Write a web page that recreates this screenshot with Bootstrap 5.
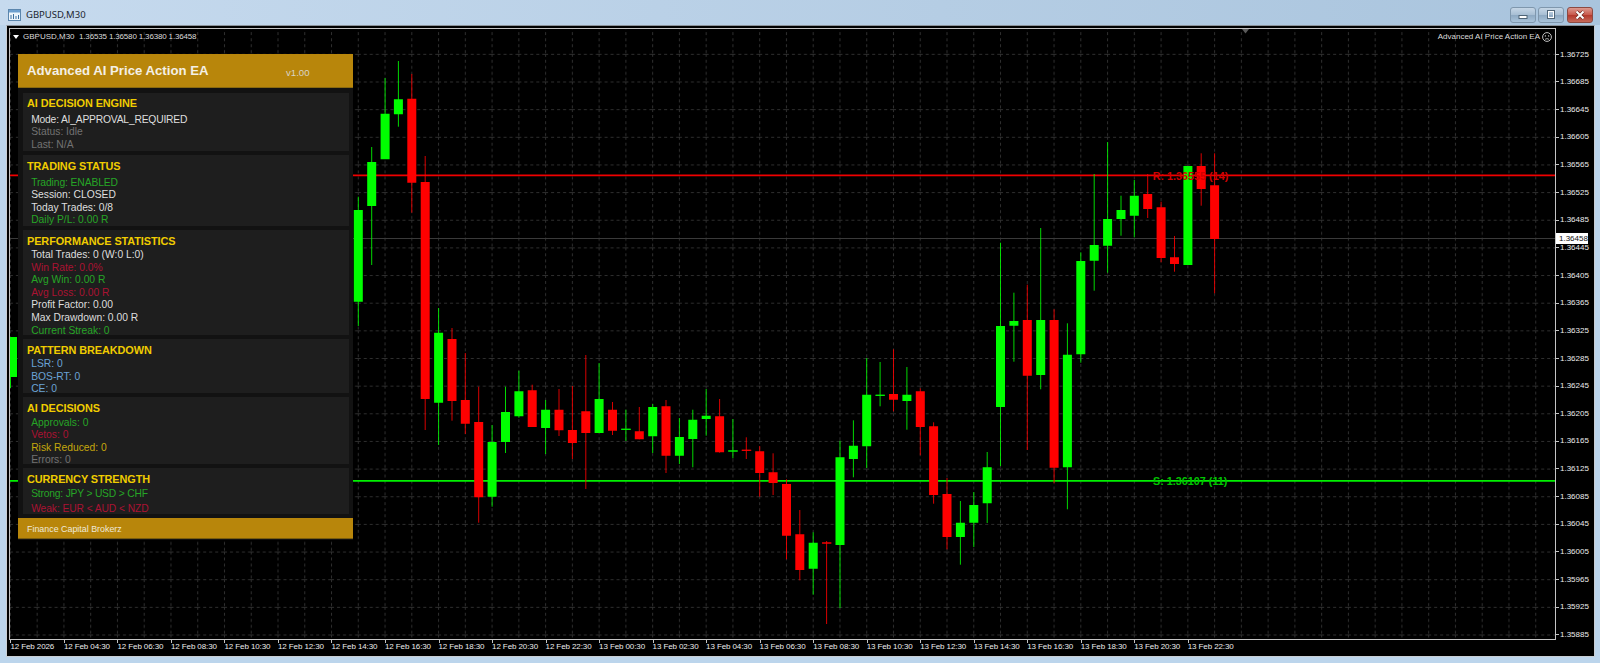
<!DOCTYPE html>
<html lang="en">
<head>
<meta charset="utf-8">
<title>GBPUSD,M30</title>
<link href="https://cdn.jsdelivr.net/npm/bootstrap@5.3.0/dist/css/bootstrap.min.css" rel="stylesheet">
<style>
html,body{height:663px;overflow:hidden;background:#bcd5ec;}
body{font-family:"Liberation Sans",Arial,sans-serif;}
.mt-root{height:663px;width:1600px;}
.mt-title{height:25px;padding:5px 7px 0 8px;background:linear-gradient(90deg,#c6daee,#a9c4dd);font-family:"Noto Sans",sans-serif;font-size:9.5px;color:#1c2630;}
.mt-title svg.ico{margin-right:5px;}
.btn-set{gap:2px;}
.win-btn{width:26px;height:16px;padding:0;border:1px solid #7f97ad;border-radius:3px;background:linear-gradient(180deg,#c6d6e6 0%,#a8bfd4 48%,#8ea9c2 52%,#a9c3da 100%);line-height:0;}
.win-btn.cl{margin-left:1px;background:linear-gradient(180deg,#dc9a90 0%,#c8594c 48%,#b4382c 52%,#c66a5a 100%);border-color:#8c4a42;}
.mt-frame{margin:0 5px 6px 6px;height:632px;border:1px solid #c9ced3;border-top-color:#8b9299;background:#000;padding:2px 0 0 2px;}
.plot-row{height:612px;}
.plot-box{width:1547px;height:612px;border:1px solid #c4c4c4;}
.plot-box svg.cv{display:block;width:1545px;height:610px;}
.price-axis{width:38px;padding-top:12.5px;color:#ececec;font-size:8px;}
.pr-lbl{height:27.65px;line-height:27.65px;}
.pr-lbl::before{content:"";width:3px;height:1px;background:#c4c4c4;margin-right:1px;flex:none;}
.pr-tag{left:0;top:205px;width:32px;height:11px;background:#fff;color:#111;line-height:11px;text-align:right;padding-right:2px;border-left:3px solid #fff;}
.time-axis{padding-left:1.4px;height:16px;color:#ececec;font-size:8px;letter-spacing:-.1px;}
.tm-lbl{width:53.52px;line-height:8px;white-space:nowrap;}
.tm-lbl::before{content:"";display:block;width:1px;height:3px;background:#c4c4c4;}
.ov-top{left:0;right:0;top:0;padding:2px 3px 0 3px;font-size:8px;line-height:11px;color:#dcdcdc;white-space:pre;}
.ov-tri{width:0;height:0;border-left:3.5px solid transparent;border-right:3.5px solid transparent;border-top:4px solid #fff;margin-right:4px;}
.ov-px{letter-spacing:-.16px;}
.ov-ea{margin-right:2px;}
.ea-panel{left:8px;top:25px;width:335px;height:486px;background:#121212;color:#ddd;font-size:10.3px;}
.ea-head{height:34px;padding-left:9px;background:#b8860b;border-bottom:1px solid #8a6a10;}
.ea-name{font-size:13.2px;font-weight:700;color:#f4f0e6;width:259px;line-height:34px;}
.ea-ver{font-size:9.6px;color:#d8d4c6;padding-top:5px;}
.ea-body{padding:4.5px 4.5px 4.3px;gap:4px;}
.ea-sec{background:#1e1e1e;padding-left:4.5px;}
.sec-a{height:58.7px;padding-top:3.4px;}
.sec-b{height:71px;padding-top:3.4px;}
.sec-c{height:105px;padding-top:3.7px;}
.sec-d{height:53.7px;padding-top:3.4px;}
.sec-e{height:67.3px;padding-top:4.3px;}
.sec-f{height:46px;padding-top:4px;}
.sec-ttl{font-size:10.9px;font-weight:700;line-height:14px;color:#f0cc00;letter-spacing:-.08px;}
.sec-a .sec-ttl{margin-bottom:3.7px;}
.sec-b .sec-ttl{margin-bottom:4px;}
.sec-c .sec-ttl,.sec-d .sec-ttl,.sec-e .sec-ttl,.sec-f .sec-ttl{margin-bottom:1.4px;}
.sec-row{line-height:12.55px;height:12.55px;padding-left:4.2px;white-space:nowrap;}
.sec-f .sec-row+.sec-row{margin-top:2.4px;}
.caps-tight{letter-spacing:-.2px;}
.caps-mid{letter-spacing:-.1px;}
.tx-w{color:#dedede;}.tx-g{color:#727272;}.tx-gn{color:#26a526;}.tx-r{color:#ab1233;}.tx-y{color:#c6a70c;}.tx-b{color:#6aa3d6;}
.ea-foot{height:21px;padding-left:9px;background:#b8860b;border-bottom:1px solid #7a5d0e;font-size:8.9px;color:#efe9d8;line-height:22px;}
</style>
</head>
<body>
<div class="mt-root d-flex flex-column">
  <div class="mt-title d-flex align-items-center">
    <svg class="ico" width="13" height="12" viewBox="0 0 13 12"><rect x=".5" y=".5" width="12" height="11" fill="#eef5fb" stroke="#5b86ad"/><rect x="1" y="1" width="11" height="2.5" fill="#6e9fce"/><path d="M3 10V6M5.500 10V5M8 10V7M10.500 10V6" stroke="#3d6f9e"/></svg>
    <span class="flex-grow-1">GBPUSD,M30</span>
    <div class="btn-set d-flex align-items-center">
      <button class="win-btn" type="button" aria-label="Minimise"><svg width="24" height="14" viewBox="0 0 24 14"><rect x="8" y="7.500" width="8" height="3" fill="#fff" stroke="#4f6476" stroke-width="1"/></svg></button>
      <button class="win-btn" type="button" aria-label="Restore"><svg width="24" height="14" viewBox="0 0 24 14"><rect x="8.500" y="2.500" width="7" height="8" fill="none" stroke="#4f6476"/><rect x="9.500" y="3.500" width="5" height="6" fill="none" stroke="#fff"/></svg></button>
      <button class="win-btn cl" type="button" aria-label="Close"><svg width="24" height="14" viewBox="0 0 24 14"><path d="M8.500 3.500l7 7M15.500 3.500l-7 7" stroke="#6e2a22" stroke-width="3.200"/><path d="M8.500 3.500l7 7M15.500 3.500l-7 7" stroke="#fff" stroke-width="2"/></svg></button>
    </div>
  </div>
  <div class="mt-frame">
    <div class="plot-row d-flex">
      <div class="plot-box position-relative">
        <svg class="cv" viewBox="10 29 1545 610" preserveAspectRatio="none">
          <defs>
            <pattern id="gridTile" patternUnits="userSpaceOnUse" x="9.900" y="53.850" width="26.760" height="27.650">
              <path d="M.5 0V27.650M0 .5H26.760" stroke="#2f2f2f" stroke-width="1" stroke-dasharray="3 3" fill="none"/>
            </pattern>
          </defs>
          <rect x="10" y="29" width="1545" height="610" fill="url(#gridTile)"/>
          <path d="M1242 29h7l-3.500 4.500z" fill="#5a5a5a"/>
          <path d="M10 238.500H1555" stroke="#3a3a3a"/>
          <path d="M10 175.300H1555" stroke="#f00000" stroke-width="1.700"/>
          <path d="M10 480.800H1555" stroke="#00f000" stroke-width="1.700"/>
          <g fill="none">
          <path stroke="#00ff00" stroke-width="9" d="M12.500 337V377M358.300 210V301.700M371.700 162V206M385.100 113.700V159.300M398.400 99.300V114.300M438.600 332.700V402.700M492.100 442V496.700M505.500 412V442M518.900 391.300V416.300M545.600 409.700V428M599.100 399V433M625.900 428.800V429.800M652.700 407V436.300M679.400 437V455.700M692.800 419.700V439M706.200 415.700V419M732.900 450.500V451.500M813.200 542.700V568.700M840 457.300V545M853.400 445.700V459M866.700 394.700V446.300M880.100 394.800V395.800M906.900 394.700V401M960.400 522.700V537M973.800 505V522.700M987.200 467.300V503.300M1000.500 326V407M1013.900 321V325.700M1040.700 320V375M1067.400 354.700V467.300M1080.800 261V354.300M1094.200 245V260.700M1107.600 219V245.700M1121 210V219M1134.300 195.700V215.700M1187.900 166V265"/>
          <path stroke="#ff0000" stroke-width="9" d="M411.800 98.700V182.700M425.200 182V399M452 339V401M465.300 400V423.700M478.700 422V497.300M532.200 390.300V427M559 409.700V430.300M572.400 430V443M585.800 411.300V433M612.500 409.700V430.700M639.300 431.300V439.300M666 406.300V455.700M719.600 416.300V452.300M746.300 449.800V450.800M759.700 451.300V473M773.100 472.300V483M786.500 484V535.700M799.800 534.300V570M826.600 542.500V543.500M893.500 394V399.700M920.300 391.300V427M933.600 426.300V495M947 494V537M1027.300 320V375.700M1054.100 320V467.700M1147.700 194V209M1161.100 207.300V258M1174.500 257.300V264M1201.200 166V189M1214.600 185.300V239"/>
          <path stroke="#00ff00" stroke-width=".85" d="M10.500 377V388M358.300 196.700V326M371.700 147V265M385.100 78V159M398.400 61V126.700M438.600 308V445M492.100 425V506.700M505.500 386.700V453M518.900 370.700V417.700M545.600 400V454M599.100 363V433M625.900 409.700V441M652.700 404V453M679.400 418V464M692.800 409.700V467.300M706.200 389V435.700M732.900 419V458.300M813.200 532.300V594.700M840 440.700V608M853.400 420.300V477.300M866.700 358V468M880.100 362V406.300M906.900 367V429.700M960.400 501V564.700M973.800 492V547M987.200 452V523M1000.500 242.700V466M1013.900 292.700V361.700M1040.700 228V389.300M1067.400 323.300V509.300M1080.800 252.300V362.700M1094.200 174V290.700M1107.600 142V272.700M1121 195.700V235.700M1134.300 180V237.300"/>
          <path stroke="#ff0000" stroke-width=".85" d="M411.800 74V212.700M425.200 156V430M452 328V420.700M465.300 353V434M478.700 386.700V522.700M532.200 384.700V427M559 389V436M572.400 386V459M585.800 355V489M612.500 402V435M639.300 407V439.300M666 400V473M719.600 399V452.700M746.300 437.300V459M759.700 446V496.700M773.100 453.300V495M786.500 479.300V559.300M799.800 510V580.300M826.600 541V624M893.500 349.300V411.300M920.300 388.300V455.300M933.600 422.300V503.700M947 478V549.300M1027.300 284.700V450M1054.100 309.300V483.300M1147.700 174V218M1161.100 201.700V262.300M1174.500 236V271.700M1201.200 153.300V205.700M1214.600 153.300V293.300"/>
          <path stroke="#00ff00" stroke-width=".85" d="M621 429.300h10M728 451h10M875.500 395.300h9.500"/>
          <path stroke="#ff0000" stroke-width=".85" d="M741.800 450.300h9.500M822 543h9.500"/>
          </g>
          <text x="1152.700" y="179.500" font-family="Liberation Sans" font-weight="700" font-size="10.800" fill="#d00000">R: 1.36555 (14)</text>
          <text x="1153" y="485" font-family="Liberation Sans" font-weight="700" font-size="10.800" fill="#00c400">S: 1.36107 (11)</text>
        </svg>
        <div class="ov-top position-absolute d-flex align-items-center">
          <span class="ov-tri"></span>
          <span class="flex-grow-1">GBPUSD,M30  <span class="ov-px">1.36535 1.36580 1.36380 1.36458</span></span>
          <span class="ov-ea">Advanced AI Price Action EA</span>
          <svg width="10" height="10" viewBox="0 0 10 10"><circle cx="5" cy="5" r="4.400" fill="none" stroke="#d4d4d4" stroke-width=".9"/><circle cx="3.400" cy="3.900" r=".7" fill="#d4d4d4"/><circle cx="6.600" cy="3.900" r=".7" fill="#d4d4d4"/><path d="M3 7.300Q5 5.900 7 7.300" fill="none" stroke="#d4d4d4" stroke-width=".8"/></svg>
        </div>
        <div class="ea-panel position-absolute d-flex flex-column">
          <div class="ea-head d-flex">
            <span class="ea-name">Advanced AI Price Action EA</span>
            <span class="ea-ver align-self-center">v1.00</span>
          </div>
          <div class="ea-body d-flex flex-column">
            <section class="ea-sec sec-a">
              <div class="sec-ttl">AI DECISION ENGINE</div>
              <div class="sec-row tx-w caps-tight">Mode: AI_APPROVAL_REQUIRED</div>
              <div class="sec-row tx-g">Status: Idle</div>
              <div class="sec-row tx-g">Last: N/A</div>
            </section>
            <section class="ea-sec sec-b">
              <div class="sec-ttl">TRADING STATUS</div>
              <div class="sec-row tx-gn caps-mid">Trading: ENABLED</div>
              <div class="sec-row tx-w">Session: CLOSED</div>
              <div class="sec-row tx-w">Today Trades: 0/8</div>
              <div class="sec-row tx-gn">Daily P/L: 0.00 R</div>
            </section>
            <section class="ea-sec sec-c">
              <div class="sec-ttl">PERFORMANCE STATISTICS</div>
              <div class="sec-row tx-w">Total Trades: 0 (W:0 L:0)</div>
              <div class="sec-row tx-r">Win Rate: 0.0%</div>
              <div class="sec-row tx-gn">Avg Win: 0.00 R</div>
              <div class="sec-row tx-r">Avg Loss: 0.00 R</div>
              <div class="sec-row tx-w">Profit Factor: 0.00</div>
              <div class="sec-row tx-w">Max Drawdown: 0.00 R</div>
              <div class="sec-row tx-gn">Current Streak: 0</div>
            </section>
            <section class="ea-sec sec-d">
              <div class="sec-ttl">PATTERN BREAKDOWN</div>
              <div class="sec-row tx-b">LSR: 0</div>
              <div class="sec-row tx-b">BOS-RT: 0</div>
              <div class="sec-row tx-b">CE: 0</div>
            </section>
            <section class="ea-sec sec-e">
              <div class="sec-ttl">AI DECISIONS</div>
              <div class="sec-row tx-gn">Approvals: 0</div>
              <div class="sec-row tx-r">Vetos: 0</div>
              <div class="sec-row tx-y">Risk Reduced: 0</div>
              <div class="sec-row tx-g">Errors: 0</div>
            </section>
            <section class="ea-sec sec-f">
              <div class="sec-ttl">CURRENCY STRENGTH</div>
              <div class="sec-row tx-gn caps-tight">Strong: JPY &gt; USD &gt; CHF</div>
              <div class="sec-row tx-r caps-mid">Weak: EUR &lt; AUD &lt; NZD</div>
            </section>
          </div>
          <div class="ea-foot">Finance Capital Brokerz</div>
        </div>
      </div>
      <div class="price-axis position-relative d-flex flex-column">
        <div class="pr-lbl d-flex align-items-center">1.36725</div>
        <div class="pr-lbl d-flex align-items-center">1.36685</div>
        <div class="pr-lbl d-flex align-items-center">1.36645</div>
        <div class="pr-lbl d-flex align-items-center">1.36605</div>
        <div class="pr-lbl d-flex align-items-center">1.36565</div>
        <div class="pr-lbl d-flex align-items-center">1.36525</div>
        <div class="pr-lbl d-flex align-items-center">1.36485</div>
        <div class="pr-lbl d-flex align-items-center">1.36445</div>
        <div class="pr-lbl d-flex align-items-center">1.36405</div>
        <div class="pr-lbl d-flex align-items-center">1.36365</div>
        <div class="pr-lbl d-flex align-items-center">1.36325</div>
        <div class="pr-lbl d-flex align-items-center">1.36285</div>
        <div class="pr-lbl d-flex align-items-center">1.36245</div>
        <div class="pr-lbl d-flex align-items-center">1.36205</div>
        <div class="pr-lbl d-flex align-items-center">1.36165</div>
        <div class="pr-lbl d-flex align-items-center">1.36125</div>
        <div class="pr-lbl d-flex align-items-center">1.36085</div>
        <div class="pr-lbl d-flex align-items-center">1.36045</div>
        <div class="pr-lbl d-flex align-items-center">1.36005</div>
        <div class="pr-lbl d-flex align-items-center">1.35965</div>
        <div class="pr-lbl d-flex align-items-center">1.35925</div>
        <div class="pr-lbl d-flex align-items-center">1.35885</div>
        <div class="pr-tag position-absolute">1.36458</div>
      </div>
    </div>
    <div class="time-axis d-flex">
      <div class="tm-lbl">12 Feb 2026</div><div class="tm-lbl">12 Feb 04:30</div><div class="tm-lbl">12 Feb 06:30</div><div class="tm-lbl">12 Feb 08:30</div><div class="tm-lbl">12 Feb 10:30</div><div class="tm-lbl">12 Feb 12:30</div><div class="tm-lbl">12 Feb 14:30</div><div class="tm-lbl">12 Feb 16:30</div><div class="tm-lbl">12 Feb 18:30</div><div class="tm-lbl">12 Feb 20:30</div><div class="tm-lbl">12 Feb 22:30</div><div class="tm-lbl">13 Feb 00:30</div><div class="tm-lbl">13 Feb 02:30</div><div class="tm-lbl">13 Feb 04:30</div><div class="tm-lbl">13 Feb 06:30</div><div class="tm-lbl">13 Feb 08:30</div><div class="tm-lbl">13 Feb 10:30</div><div class="tm-lbl">13 Feb 12:30</div><div class="tm-lbl">13 Feb 14:30</div><div class="tm-lbl">13 Feb 16:30</div><div class="tm-lbl">13 Feb 18:30</div><div class="tm-lbl">13 Feb 20:30</div><div class="tm-lbl">13 Feb 22:30</div>
    </div>
  </div>
</div>
<script src="https://cdn.jsdelivr.net/npm/bootstrap@5.3.0/dist/js/bootstrap.bundle.min.js"></script>
</body>
</html>
